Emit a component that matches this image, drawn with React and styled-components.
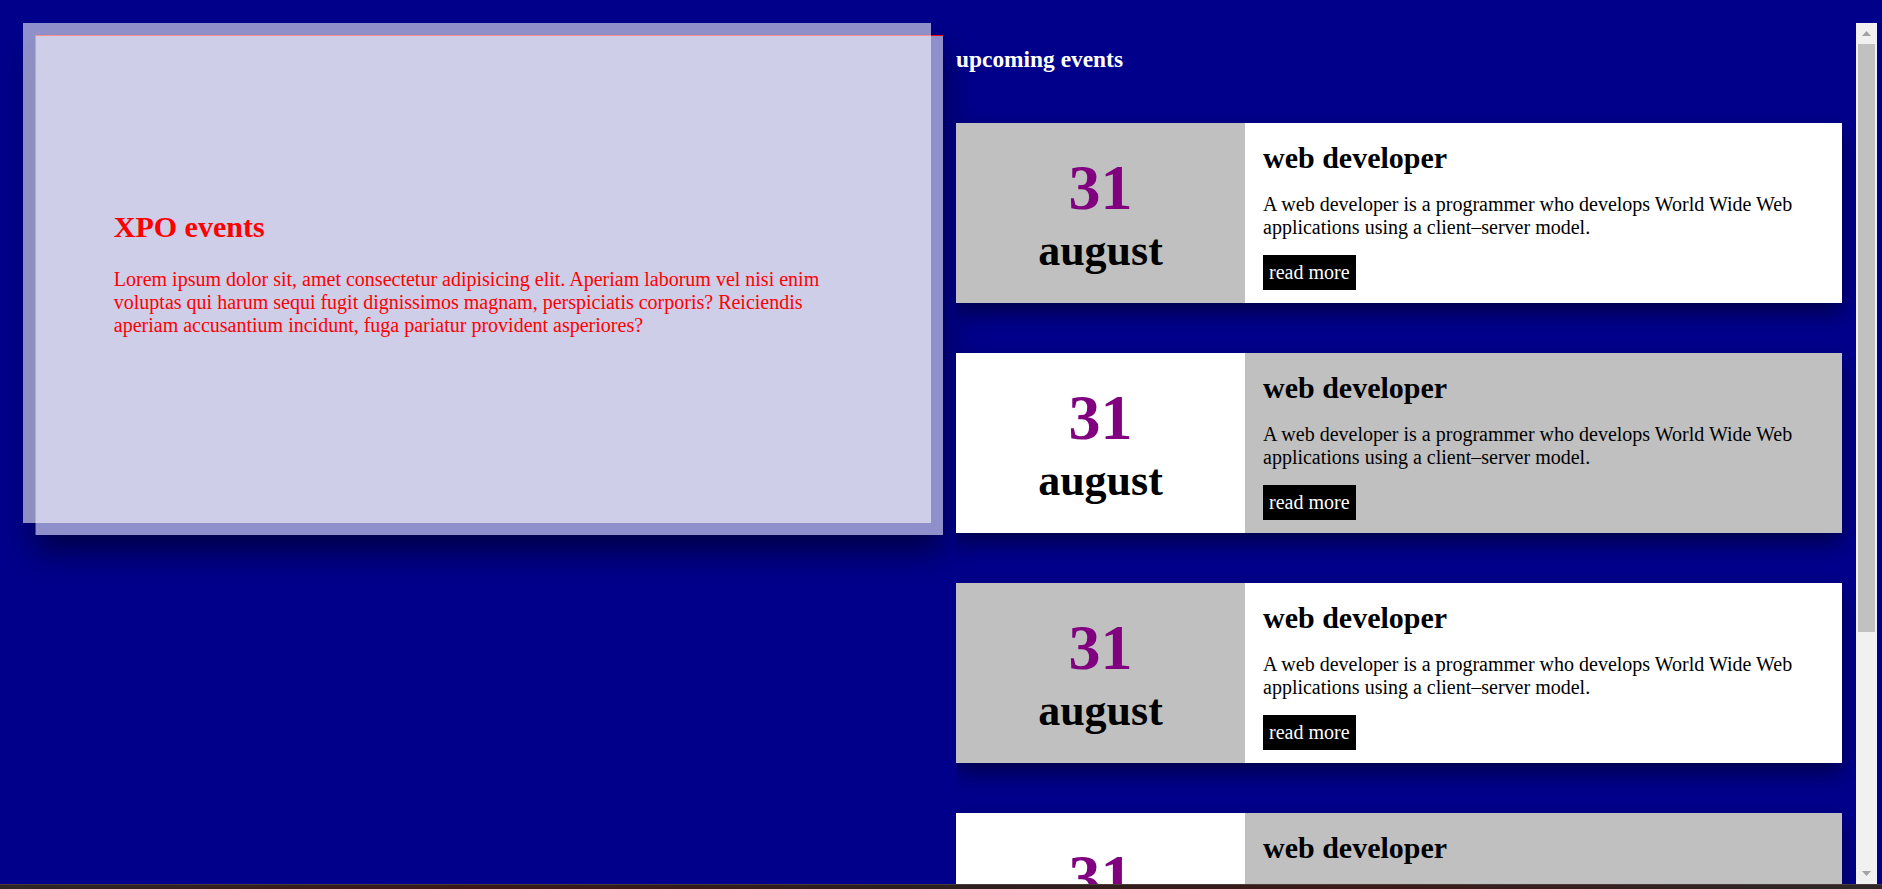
import React from 'react';
import styled, { createGlobalStyle } from 'styled-components';

const GlobalStyle = createGlobalStyle`
  html, body {
    margin: 0;
    height: 100%;
  }
  body {
    background: #00008b;
    font-family: "Liberation Serif", "Times New Roman", serif;
    font-size: 20px;
    overflow: hidden;
  }
  #root {
    height: 100%;
  }
`;

const Shell = styled.div`
  display: flex;
  flex-direction: column;
  height: 100vh;
`;

const Main = styled.main`
  flex: 1;
  min-height: 0;
  display: grid;
  grid-template-columns: 908px 1fr;
  column-gap: 25px;
  padding: 23px 5px 0 23px;
`;

const Hero = styled.section`
  position: relative;
  align-self: start;
  box-sizing: border-box;
  height: 500px;
  padding: 0 10%;
  display: flex;
  flex-direction: column;
  justify-content: center;
  background: rgba(255, 255, 255, 0.56);
  color: #ff0000;

  &::before {
    content: '';
    position: absolute;
    top: 12px;
    left: 12px;
    width: 100%;
    height: 100%;
    box-sizing: border-box;
    background: rgba(255, 255, 255, 0.56);
    border-top: 1px solid #ff0000;
    border-left: 1px solid #ff0000;
    box-shadow: 0 16px 30px rgba(0, 0, 0, 0.5);
    z-index: -1;
  }

  h2 {
    margin: 0 0 24px;
    font-size: 30px;
  }

  p {
    margin: 0;
  }
`;

const Events = styled.aside`
  min-height: 0;
  display: flex;
`;

const EventList = styled.div`
  flex: 1;
  min-width: 0;
  overflow: hidden;
  padding-right: 14px;
`;

const ScrollBar = styled.div`
  width: 21px;
  display: flex;
  flex-direction: column;
  background: #f1f1f1;
`;

const ScrollButton = styled.div`
  height: 21px;
  display: flex;
  align-items: center;
  justify-content: center;
`;

const ScrollTrack = styled.div`
  flex: 1;
  padding: 0 2px;
`;

const Thumb = styled.div`
  height: 588px;
  background: #c1c1c1;
`;

const Arrow = ({ down }) => (
  <svg width="9" height="5" viewBox="0 0 9 5">
    <polygon points={down ? '0,0 9,0 4.5,5' : '4.5,0 9,5 0,5'} fill="#a3a3a3" />
  </svg>
);

const EventsTitle = styled.h3`
  margin: 23.4px 0 0;
  font-size: 23.4px;
  color: #fff;
`;

const Card = styled.article`
  margin-top: 50px;
  display: grid;
  grid-template-columns: 289px 1fr;
  box-shadow: 0 10px 20px rgba(0, 0, 0, 0.45);
`;

const DateCell = styled.div`
  display: flex;
  flex-direction: column;
  justify-content: center;
  align-items: center;
  background: ${({ $grey }) => ($grey ? '#c0c0c0' : '#fff')};
  font-weight: bold;
`;

const Day = styled.span`
  font-size: 64px;
  color: #800080;
`;

const Month = styled.span`
  font-size: 44px;
  color: #000;
`;

const Info = styled.div`
  padding: 18px 18px 13px;
  background: ${({ $grey }) => ($grey ? '#c0c0c0' : '#fff')};
  color: #000;

  h2 {
    margin: 0 0 18px;
    font-size: 30px;
  }

  p {
    margin: 0 0 16px;
  }
`;

const ReadMore = styled.button`
  display: block;
  border: 0;
  padding: 6px;
  background: #000;
  color: #fff;
  font: inherit;
  line-height: normal;
`;

const Taskbar = styled.div`
  height: 5px;
  border-top: 1px solid #4a3a3a;
  box-sizing: border-box;
  background: linear-gradient(90deg, #2e2626, #3c1818 25%, #2b1f1f 50%, #3b1a1a 72%, #2d2727);
`;

const events = [1, 2, 3, 4, 5];

export default function App() {
  return (
    <>
      <GlobalStyle />
      <Shell>
        <Main>
          <Hero>
            <h2>XPO events</h2>
            <p>
              Lorem ipsum dolor sit, amet consectetur adipisicing elit. Aperiam laborum vel nisi enim
              voluptas qui harum sequi fugit dignissimos magnam, perspiciatis corporis? Reiciendis
              aperiam accusantium incidunt, fuga pariatur provident asperiores?
            </p>
          </Hero>
          <Events>
            <EventList>
              <EventsTitle>upcoming events</EventsTitle>
              {events.map((n, i) => (
                <Card key={n}>
                  <DateCell $grey={i % 2 === 0}>
                    <Day>31</Day>
                    <Month>august</Month>
                  </DateCell>
                  <Info $grey={i % 2 === 1}>
                    <h2>web developer</h2>
                    <p>
                      A web developer is a programmer who develops World Wide Web applications using
                      a client–server model.
                    </p>
                    <ReadMore>read more</ReadMore>
                  </Info>
                </Card>
              ))}
            </EventList>
            <ScrollBar>
              <ScrollButton>
                <Arrow />
              </ScrollButton>
              <ScrollTrack>
                <Thumb />
              </ScrollTrack>
              <ScrollButton>
                <Arrow down />
              </ScrollButton>
            </ScrollBar>
          </Events>
        </Main>
        <Taskbar />
      </Shell>
    </>
  );
}
